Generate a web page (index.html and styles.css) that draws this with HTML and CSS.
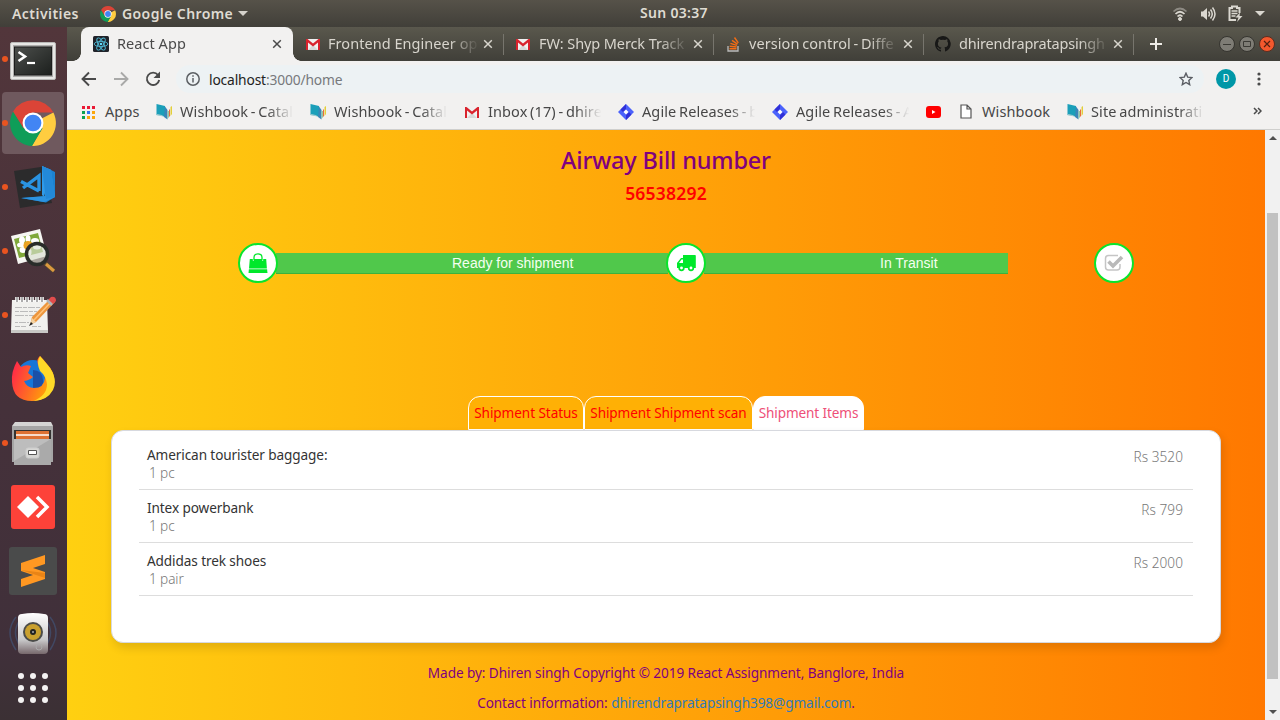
FILE: index.html
```html
<!DOCTYPE html>
<html lang="en">
<head>
<meta charset="utf-8">
<title>React App</title>
<link rel="stylesheet" href="styles.css">
</head>
<body>
<svg class="defs" width="0" height="0">
  <defs>
    <symbol id="chrome" viewBox="0 0 44 44">
      <path d="M22 22 41.500 12A22 22 0 0 1 21 44L31 27z" fill="#ffcd40"/>
      <path d="M22 22 13 27 3 11A22 22 0 0 0 21 44L31 27z" fill="#0f9d58"/>
      <path d="M3 11 13 27 22 22V12H41.500A22 22 0 0 0 3 11z" fill="#db4437"/>
      <circle cx="22" cy="22" r="10" fill="#fff"/><circle cx="22" cy="22" r="8" fill="#4285f4"/>
    </symbol>
    <symbol id="gmail" viewBox="0 0 16 16">
      <path d="M1 3h14v11H1z" fill="#f1f1f1"/><path d="M3 14 8 9l5 5z" fill="#d8d8d8"/>
      <path d="M1 14V3h1.500L8 7.500 13.500 3H15v11h-2V6.500L8 10.500 3 6.500V14z" fill="#d9232e"/>
    </symbol>
    <symbol id="wish" viewBox="0 0 17 17">
      <path d="M.500 1 9 3v11L5.500 12.500.500 12z" fill="#1b9fb9"/><path d="M0 12l1.500-1 4 1L9 14 5 13z" fill="#9bc9cf"/>
      <path d="M9 3.500 11.500 7v9.500L8 14z" fill="#3a86b8"/>
      <path d="M11.500 8h1.500v6l-1.500 2z" fill="#8fc6a8"/><path d="M13 7l1-1v7l-1 1z" fill="#e96b3c"/><path d="M14.500 4l1.500-1v8l-1.500 2z" fill="#e3cf3a"/>
    </symbol>
    <symbol id="jira" viewBox="0 0 16 16">
      <path d="M8 0 16 8 8 16 0 8z" fill="#4b62fb"/><path d="M8 0v5L5 8 2.500 5.500z M8 16v-5l3-3 2.500 2.500z" fill="#3030d8"/><path d="M8 5.500 10.500 8 8 10.500 5.500 8z" fill="#fff"/>
    </symbol>
    <symbol id="close" viewBox="0 0 10 10"><path d="M1.200 1.200 8.800 8.800M8.800 1.200 1.200 8.800" stroke="currentColor" stroke-width="1.500" fill="none"/></symbol>
  </defs>
</svg>

<header class="topbar">
  <span class="activities">Activities</span>
  <svg class="app-logo" width="16" height="16"><use href="#chrome"/></svg>
  <span class="app-name">Google Chrome</span>
  <svg class="caret" width="10" height="5" viewBox="0 0 10 5"><path d="M0 0h10L5 5z" fill="#d5d2cb"/></svg>
  <span class="clock">Sun 03:37</span>
  <div class="tray">
    <svg width="16" height="14" viewBox="0 0 16 14" fill="none" stroke="#dad7d0" stroke-width="1.700"><path d="M1.500 4.500Q8-1.500 14.500 4.500" stroke="#8d8a83"/><path d="M3.500 7Q8 2.500 12.500 7M5.500 9.500Q8 7 10.500 9.500"/><circle cx="8" cy="12" r="1.500" fill="#dad7d0" stroke-width="1"/></svg>
    <svg width="16" height="16" viewBox="0 0 16 16" fill="none" stroke="#dad7d0" stroke-width="1.500"><path d="M1 5.500h2L7 2v12l-4-3.500H1z" fill="#dad7d0" stroke="none"/><path d="M8.500 5.500q2 2.500 0 5M10.500 3.500q3.500 4.500 0 9M12.500 1.500q5 6.500 0 13"/></svg>
    <svg width="15" height="17" viewBox="0 0 15 17" fill="none" stroke="#dad7d0"><path d="M8 15H1.500V3H4V1.500h5V3h2.500v5" stroke-width="2"/><path d="M3.500 6h6M3.500 8.500h6M3.500 11h4" stroke-width="1.400"/><path d="M12 7.500 7.500 12.500h3L9 17l5.500-6h-3z" fill="#dad7d0" stroke="none"/></svg>
    <svg width="10" height="5" viewBox="0 0 10 5"><path d="M0 0h10L5 5z" fill="#dad7d0"/></svg>
  </div>
</header>

<div class="desktop">
  <nav class="dock">
    <div class="slot running"><svg class="terminal" width="46" height="38" viewBox="0 0 46 38"><defs><linearGradient id="tg" x2="1" y2="1"><stop stop-color="#4c4f4c"/><stop offset="1" stop-color="#1c1f1d"/></linearGradient></defs><rect x=".5" y=".5" width="45" height="37" rx="1.500" fill="#e7e7e5" stroke="#b9b9b7"/><rect x="3" y="3" width="40" height="32" fill="#acacaa"/><rect x="4.500" y="5" width="37" height="28" fill="url(#tg)" stroke="#1c1c1c"/><path d="M8.500 10 15 14.500 8.500 19" fill="none" stroke="#fff" stroke-width="2.600"/><path d="M17 21h8" stroke="#fff" stroke-width="2.200"/></svg></div>
    <div class="slot running current"><svg width="46" height="46"><use href="#chrome"/></svg></div>
    <div class="slot running"><svg width="46" height="46" viewBox="0 0 46 46"><path d="M4 7 34 2.500l8 36.500L10 44z" fill="#2b2b2c"/><path d="M11 34 33 32.500 36 34 38 4.500 45 8v25l-9 5.500z" fill="#1c82d0"/><path d="M32 2 41 6 34 33 32 31z" fill="#2f9bea"/><path d="M32 2 41 6 45 33 34 38 11 34 35 32z" fill="#2c93e0"/><path d="M32 2 41 6 45 33 36 35z" fill="#2389d8"/><path d="M11 17.500 29 27M13 24 29 12v15" fill="none" stroke="#2a93e2" stroke-width="3.400"/></svg></div>
    <div class="slot running"><svg width="46" height="46" viewBox="0 0 46 46"><path d="M1 8 30 1l7 27L8 36z" fill="#f6f6f2"/><path d="M4 11 28 5l5 19L9 30z" fill="#7fa83a"/><g fill="#fff"><ellipse cx="11" cy="17" rx="4" ry="2.500"/><ellipse cx="18" cy="11" rx="2.500" ry="4"/><ellipse cx="12" cy="12" rx="3" ry="3.500"/><ellipse cx="25" cy="13" rx="4" ry="3"/><ellipse cx="27" cy="19" rx="4" ry="2.500"/><ellipse cx="19" cy="24" rx="2.500" ry="4"/><ellipse cx="13" cy="22" rx="3.500" ry="3"/></g><circle cx="18" cy="17.500" r="4.500" fill="#eaa322"/><path d="M35 35 44 43" stroke="#51442f" stroke-width="5"/><path d="M36 36 44 43" stroke="#dc9a3f" stroke-width="3"/><circle cx="27" cy="26" r="10.500" fill="#d8dfcf" fill-opacity=".65" stroke="#292c29" stroke-width="3.500"/></svg></div>
    <div class="slot running"><svg width="46" height="40" viewBox="0 0 46 40"><path d="M2 5h35l1 31H1z" fill="#f1f1ee"/><path d="M1 35h37v3H1z" fill="#c8c8c5"/><path d="M7 2v5M12 2v5M17 2v5M22 2v5M27 2v5M32 2v5" stroke="#fff" stroke-width="3.600"/><path d="M7 2v5M12 2v5M17 2v5M22 2v5M27 2v5M32 2v5" stroke="#777" stroke-width="1.200"/><path d="M5 12.500h26" stroke="#bbb" stroke-dasharray="7 1 4 1"/><path d="M5 16.500h22" stroke="#bbb" stroke-dasharray="4 1 8 1"/><path d="M5 20.500h19" stroke="#bbb" stroke-dasharray="9 1 3 1"/><path d="M5 27.500h14" stroke="#bbb" stroke-dasharray="3 1 7 1"/><path d="M5 31.500h11M22 31.500h9" stroke="#bbb" stroke-dasharray="5 1"/><path d="m20 30 2-8L41 3l4 4-19 20z" fill="#ed963d"/><path d="m24 25 18-19" stroke="#ffc37a" stroke-width="1.500"/><path d="m38 5 3-3q5-1 5 4l-3 3z" fill="#e14c4c"/><path d="m37 5 5 5" stroke="#aeb5bb" stroke-width="2.500"/><path d="m20 30 2-7 4 4z" fill="#f3d2a1"/><path d="m19 31 2-4 2 2z" fill="#222"/></svg></div>
    <div class="slot"><svg width="44" height="46" viewBox="0 0 44 46"><defs><linearGradient id="fx" x1="0" y1=".3" x2="1" y2=".7"><stop stop-color="#ff2849"/><stop offset=".5" stop-color="#ff6a24"/><stop offset="1" stop-color="#ffb300"/></linearGradient></defs><circle cx="22" cy="20" r="16" fill="#1676d8"/><path d="M22 14q9 0 10 10t-10 10z" fill="#1b50a8"/><path d="M6 5 10 11q5-3 10-1l-3 7 5 4q-3 3-9 4 3 7 10 7 10 0 11-10-1-8-7-13-2-6 2-9 4 4 7 8 8 8 7 18-3 19-22 19T1 26Q0 16 6 5z" fill="url(#fx)"/><path d="M29 0q7 8 10 12 8 12 3 22-6 11-20 11 14-5 14-17-1-8-7-13-4-8 0-15z" fill="#ffda28"/></svg></div>
    <div class="slot running"><svg width="44" height="46" viewBox="0 0 44 46"><path d="M4 2h36l2 4H1z" fill="#d5d5d4"/><path d="M1 6h41v36H1z" fill="#a5a5a5"/><path d="M3 10h37v11H3z" fill="#343331"/><path d="M5 11h33v9H5z" fill="#dd7133"/><path d="M5 15h33" stroke="#fff" stroke-width="1.500"/><path d="M3 19h37v26H3z" fill="#aaa"/><path d="M3 19h37L3 41z" fill="#bdbdbd"/><rect x="15" y="28" width="13" height="10" rx="2" fill="#d7d7d5" stroke="#ccc"/><path d="M17.500 30.500h8v4h-8z" fill="#fff" stroke="#555"/></svg></div>
    <div class="slot"><svg width="44" height="44" viewBox="0 0 44 44"><rect width="44" height="44" rx="3" fill="#fd4239"/><path d="M17 11 28 22 17 33 6 22z" fill="#fff"/><path d="M26 12 36 22 26 32" fill="none" stroke="#fff" stroke-width="3.500"/></svg></div>
    <div class="slot"><svg width="48" height="48" viewBox="0 0 48 48"><rect width="48" height="48" rx="3" fill="#4a4b4b"/><path d="M12 16 36 8v9l-12 4 12 4v7l-24 8v-8l12-4-12-4z" fill="#ff9822"/><path d="m12 23 24 3v5z" fill="#e98416"/></svg></div>
    <div class="slot"><svg width="50" height="46" viewBox="0 0 50 46"><defs><linearGradient id="sp" x2="0" y2="1"><stop stop-color="#fff"/><stop offset=".65" stop-color="#c9c9ca"/><stop offset="1" stop-color="#77686c"/></linearGradient></defs><path d="M8 5Q-4 20 8 38M12 8Q3 20 12 34M42 5Q54 20 42 38M38 8Q47 20 38 34" fill="none" stroke="#414863" stroke-width="1.500"/><path d="M14 2q11-2 22 0 4 0 4 4v32q0 4-4 4H14q-4 0-4-4V6q0-4 4-4z" fill="url(#sp)"/><circle cx="25" cy="20" r="10" fill="#4b4c49"/><circle cx="25" cy="20" r="8" fill="#c9a02e"/><circle cx="25" cy="20" r="3" fill="#222"/><circle cx="25" cy="20" r="1" fill="#aaa"/><circle cx="31" cy="35" r="3" fill="none" stroke="#aaa"/></svg></div>
    <div class="show-apps"><i></i><i></i><i></i><i></i><i></i><i></i><i></i><i></i><i></i></div>
  </nav>

  <section class="browser">
    <div class="tabstrip">
      <div class="tab active">
        <svg width="16" height="16" viewBox="0 0 16 16"><rect width="16" height="16" rx="1.500" fill="#20232a"/><g fill="none" stroke="#50b9d4" stroke-width=".9"><ellipse cx="8" cy="8" rx="6.800" ry="2.600"/><ellipse cx="8" cy="8" rx="6.800" ry="2.600" transform="rotate(60 8 8)"/><ellipse cx="8" cy="8" rx="6.800" ry="2.600" transform="rotate(120 8 8)"/></g><circle cx="8" cy="8" r="1.300" fill="#61dafb"/></svg>
        <span class="tab-title">React App</span><svg class="x" width="10" height="10"><use href="#close"/></svg>
      </div>
      <div class="tab"><svg width="16" height="16"><use href="#gmail"/></svg><span class="tab-title">Frontend Engineer op</span><svg class="x" width="10" height="10"><use href="#close"/></svg></div>
      <div class="tab"><svg width="16" height="16"><use href="#gmail"/></svg><span class="tab-title merck">FW: Shyp Merck Track</span><svg class="x" width="10" height="10"><use href="#close"/></svg></div>
      <div class="tab"><svg width="16" height="16" viewBox="0 0 16 16" fill="none"><path d="M3 10v5h10v-5" stroke="#bbb" stroke-width="1.300"/><path d="M4.500 12.800h7M4.700 10.200l6.900.8M5.400 7.300l6.500 2.100M7 4.300l5.500 3.800M9.500 1.500l3.800 5.300" stroke="#f46d14" stroke-width="1.400"/></svg><span class="tab-title version">version control - Diffe</span><svg class="x" width="10" height="10"><use href="#close"/></svg></div>
      <div class="tab"><svg width="16" height="16" viewBox="0 0 16 16"><path fill="#181817" d="M8 0C3.600 0 0 3.600 0 8c0 3.500 2.300 6.500 5.500 7.600.4.100.5-.2.500-.4v-1.500c-2.200.5-2.700-.9-2.700-.9-.4-.9-.9-1.200-.9-1.200-.7-.5.100-.5.100-.5.800.1 1.200.8 1.200.8.700 1.200 1.900.9 2.300.7.100-.5.300-.9.500-1.100-1.800-.2-3.600-.9-3.600-4 0-.9.300-1.600.8-2.100-.1-.2-.4-1 .1-2.100 0 0 .7-.2 2.200.8a7.500 7.500 0 0 1 4 0c1.500-1 2.200-.8 2.200-.8.400 1.100.2 1.900.1 2.100.5.600.8 1.300.8 2.100 0 3.100-1.900 3.700-3.700 3.900.3.300.6.700.6 1.500v2.200c0 .2.100.5.500.4A8 8 0 0 0 8 0z"/></svg><span class="tab-title profile">dhirendrapratapsingh</span><svg class="x" width="10" height="10"><use href="#close"/></svg></div>
      <svg class="new-tab" width="12" height="12" viewBox="0 0 12 12"><path d="M6 0v12M0 6h12" stroke="#eeece7" stroke-width="2"/></svg>
      <div class="window-buttons">
        <svg width="16" height="16" viewBox="0 0 16 16"><circle cx="8" cy="8" r="7.500" fill="#7e7c75" stroke="#35342f"/><path d="M4 8.500h8" stroke="#3b3a35"/></svg>
        <svg width="16" height="16" viewBox="0 0 16 16"><circle cx="8" cy="8" r="7.500" fill="#7e7c75" stroke="#35342f"/><path d="M4.500 5.500h7v5h-7z" fill="none" stroke="#3b3a35"/></svg>
        <svg width="16" height="16" viewBox="0 0 16 16"><circle cx="8" cy="8" r="7.500" fill="#f4582d" stroke="#5a2d20"/><path d="m5 5 6 6m0-6-6 6" stroke="#542010" stroke-width="1.200"/></svg>
      </div>
    </div>

    <div class="toolbar">
      <svg width="16" height="16" viewBox="0 0 16 16" fill="none" stroke="#4a4a4a" stroke-width="1.900"><path d="M15 8H2M8 1.500 1.500 8 8 14.500"/></svg>
      <svg width="16" height="16" viewBox="0 0 16 16" fill="none" stroke="#a9a9a8" stroke-width="1.900"><path d="M1 8h13M8 1.500 14.500 8 8 14.500"/></svg>
      <svg width="16" height="16" viewBox="0 0 16 16"><path d="M13 4A6.200 6.200 0 1 0 14.200 9" fill="none" stroke="#4a4a4a" stroke-width="1.900"/><path d="M15 .5V7H8.500z" fill="#4a4a4a"/></svg>
      <div class="omnibox">
        <svg width="14" height="14" viewBox="0 0 14 14"><circle cx="7" cy="7" r="6.200" fill="none" stroke="#5c6064" stroke-width="1.500"/><path d="M7 6v4.500M7 3.200v1.600" stroke="#5c6064" stroke-width="1.500"/></svg>
        <span class="url"><b>localhost</b>:3000/home</span>
        <svg class="star" width="14" height="14" viewBox="0 0 14 14"><path d="m7 1.200 1.700 3.900 4.300.4-3.200 2.900.9 4.300L7 10.500l-3.700 2.200.9-4.300L1 5.500l4.300-.4z" fill="none" stroke="#5a5d63" stroke-width="1.400"/></svg>
      </div>
      <span class="avatar">D</span>
      <svg class="menu" width="4" height="14" viewBox="0 0 4 14" fill="#4a4a4a"><circle cx="2" cy="2" r="1.600"/><circle cx="2" cy="7" r="1.600"/><circle cx="2" cy="12" r="1.600"/></svg>
    </div>

    <div class="bookmarks">
      <span class="bm bm-apps"><svg width="14" height="14" viewBox="0 0 14 14"><path d="M1 1h3v3H1zM6 1h3v3H6zM11 1h3v3h-3z" fill="#ea1a35"/><path d="M1 6h3v3H1z" fill="#0ba353"/><path d="M6 6h3v3H6z" fill="#2f75f4"/><path d="M11 6h3v3h-3zM6 11h3v3H6zM11 11h3v3h-3z" fill="#fba70b"/><path d="M1 11h3v3H1z" fill="#0ba353"/></svg><span>Apps</span></span>
      <span class="bm"><svg width="17" height="17"><use href="#wish"/></svg><span class="fade">Wishbook - Catal</span></span>
      <span class="bm"><svg width="17" height="17"><use href="#wish"/></svg><span class="fade">Wishbook - Catal</span></span>
      <span class="bm"><svg width="16" height="16"><use href="#gmail"/></svg><span class="fade">Inbox (17) - dhire</span></span>
      <span class="bm"><svg width="16" height="16"><use href="#jira"/></svg><span class="fade">Agile Releases - b</span></span>
      <span class="bm"><svg width="16" height="16"><use href="#jira"/></svg><span class="fade">Agile Releases - A</span></span>
      <span class="bm bm-video"><svg width="15" height="12" viewBox="0 0 15 12"><rect width="15" height="12" rx="3" fill="#f00"/><path d="M6 4v4l3.500-2z" fill="#fff"/></svg></span>
      <span class="bm bm-page"><svg width="12" height="15" viewBox="0 0 12 15"><path d="M1 1h6l4 4v9H1zM7 1v4h4" fill="#fff" stroke="#555" stroke-width="1.200"/></svg><span>Wishbook</span></span>
      <span class="bm"><svg width="17" height="17"><use href="#wish"/></svg><span class="fade site">Site administrati</span></span>
      <svg class="more" width="9" height="8" viewBox="0 0 9 8"><path d="M1 1l3 3-3 3M5 1l3 3-3 3" fill="none" stroke="#4a4a4a" stroke-width="1.500"/></svg>
    </div>

    <div class="viewport">
      <main class="page">
        <h1>Airway Bill number</h1>
        <h2>56538292</h2>
        <div class="progress">
          <div class="step"><svg width="20" height="20" viewBox="0 0 20 20"><path d="M1.800 6h3v1.500q.5 1 1.200 0V6h8v1.500q.5 1 1.200 0V6h3l.7 9.500H1z" fill="#00e82b"/><path d="M.9 16.300h18.200l.4 3.700H.5z" fill="#00e82b"/><path d="M6 7.500V4.500Q6 .8 10 .8t4 3.700v3" fill="none" stroke="#00e82b" stroke-width="1.300"/></svg></div>
          <div class="bar bar-ready">Ready for shipment</div>
          <div class="step"><svg width="20" height="18" viewBox="0 0 20 18"><path d="M7 1h12q.8 0 .8.800V14H1V9l4-5h2zM3 9h4V5.500H5.500z" fill="#00e82b" fill-rule="evenodd"/><circle cx="5.500" cy="14" r="2.300" fill="#fff" stroke="#00e82b" stroke-width="1.700"/><circle cx="15" cy="14" r="2.300" fill="#fff" stroke="#00e82b" stroke-width="1.700"/></svg></div>
          <div class="bar bar-transit">In Transit</div>
          <div class="step step-last"><svg width="20" height="18" viewBox="0 0 20 18"><path d="M14 1.500H4.500q-3 0-3 3v8.500q0 3 3 3H13q3 0 3-3v-3" fill="none" stroke="#c5c5c5" stroke-width="1.500"/><path d="M4.500 7.500 9 12l9-9" fill="none" stroke="#b9b9b9" stroke-width="3.600"/></svg></div>
        </div>
        <div class="page-tabs">
          <span>Shipment Status</span><span class="scan">Shipment Shipment scan</span><span class="selected">Shipment Items</span>
        </div>
        <div class="card">
          <div class="item"><div><p class="name">American tourister baggage:</p><p class="qty">1 pc</p></div><span class="price">Rs 3520</span></div>
          <div class="item"><div><p class="name">Intex powerbank</p><p class="qty">1 pc</p></div><span class="price">Rs 799</span></div>
          <div class="item"><div><p class="name">Addidas trek shoes</p><p class="qty">1 pair</p></div><span class="price">Rs 2000</span></div>
        </div>
        <footer>
          <p class="made">Made by: Dhiren singh Copyright © 2019 React Assignment, Banglore, India</p>
          <p class="contact">Contact information: <a>dhirendrapratapsingh398@gmail.com</a>.</p>
        </footer>
      </main>
      <div class="scrollbar">
        <svg width="8" height="4" viewBox="0 0 8 4"><path d="M0 4h8L4 0z" fill="#505050"/></svg>
        <div class="thumb"></div>
        <svg class="down" width="8" height="4" viewBox="0 0 8 4"><path d="M0 0h8L4 4z" fill="#505050"/></svg>
      </div>
    </div>
  </section>
</div>
</body>
</html>
```
FILE: styles.css
```css
* { box-sizing: border-box; }
body { margin: 0; width: 1280px; height: 720px; overflow: hidden; font-family: "Noto Sans", "Open Sans", sans-serif; }
svg { display: block; flex: none; }
.defs { position: absolute; }
p, h1, h2 { margin: 0; }

/* system bar */
.topbar { position: relative; display: flex; align-items: center; height: 27px; padding: 0 15px 0 12px; background: linear-gradient(#565249, #413f39); color: #dfdbd2; font-size: 14px; font-weight: 600; white-space: nowrap; }
.activities { width: 68px; letter-spacing: .45px; }
.app-logo { margin-left: 20px; }
.app-name { width: 111px; margin-left: 6px; letter-spacing: .4px; }
.caret { margin-left: 5px; }
.clock { position: absolute; left: 640px; letter-spacing: .3px; top: 3px; }
.tray { display: flex; align-items: center; gap: 12px; margin-left: auto; }

/* dock */
.desktop { display: flex; height: 693px; }
.dock { width: 67px; background: linear-gradient(#52363b, #45313a 55%, #40303a 90%, #3b3034); padding-top: 1px; }
.slot { position: relative; display: flex; align-items: center; justify-content: center; height: 62px; width: 62px; margin: 0 0 2px 2px; border-radius: 4px; }
.terminal { margin-top: 4px; }
.current { background: #6f595e; }
.running::before { content: ""; position: absolute; left: 0; top: 28px; width: 6px; height: 6px; border-radius: 50%; background: #e95420; }
.show-apps { display: grid; grid-template-columns: repeat(3, 6px); gap: 6px; margin: 7px 0 0 18px; }
.show-apps i { height: 6px; border-radius: 50%; background: #f4f2f2; }

/* browser frame */
.browser { width: 1213px; display: flex; flex-direction: column; }
.tabstrip { display: flex; height: 34px; padding-left: 14px; background: linear-gradient(#5a584d, #403f39); color: #d8d5cd; }
.tab { position: relative; display: flex; align-items: center; width: 210px; padding-left: 12px; font-size: 14.500px; letter-spacing: .05px; }
.tab:not(.active)::after { content: ""; position: absolute; right: -1px; top: 7px; width: 1px; height: 21px; background: #77756d; }
.tab-title { width: 151px; margin-left: 7px; padding-bottom: 2px; white-space: nowrap; -webkit-mask-image: linear-gradient(90deg, #000 80%, transparent); mask-image: linear-gradient(90deg, #000 80%, transparent); }
.tab .x { margin-left: 4px; }
.merck { letter-spacing: -.1px; margin-left: 8px; width: 150px; }
.version { letter-spacing: .08px; word-spacing: -1.200px; margin-left: 8px; width: 150px; }
.profile { letter-spacing: -.2px; margin-left: 8px; width: 150px; }
.tab.active { width: 212px; background: #f2f1f0; border-radius: 8px 8px 0 0; color: #4a4a4a; }
.active::before, .active::after { content: ""; position: absolute; bottom: 0; width: 8px; height: 8px; }
.active::before { left: -8px; background: radial-gradient(circle at 0 0, transparent 7.500px, #f2f1f0 8px); }
.active::after { right: -8px; background: radial-gradient(circle at 100% 0, transparent 7.500px, #f2f1f0 8px); }
.active .tab-title { margin-left: 8px; }
.new-tab { align-self: center; margin-left: 17px; }
.window-buttons { display: flex; align-items: center; gap: 4px; margin: 0 5px 0 auto; }
.toolbar { display: flex; align-items: center; height: 36px; padding-left: 14px; gap: 16px; background: #f2f1f0; }
.omnibox { display: flex; align-items: center; width: 1028px; height: 28px; margin-left: -1px; padding: 0 11px 0 10px; border-radius: 14px; background: #edf2f4; }
.url { margin-left: 9px; color: #77797c; font-size: 13.800px; letter-spacing: -.15px; }
.url b { color: #222; font-weight: 400; }
.star { margin-left: auto; }
.avatar { width: 20px; height: 20px; margin-left: -4px; border-radius: 50%; background: #0097a7; color: #fff; font: 10px/20px Roboto, sans-serif; text-align: center; }
.menu { margin-left: 5px; }
.bookmarks { display: flex; align-items: center; height: 33px; padding: 0 0 4px 14px; border-bottom: 1px solid #cfcfcd; background: #f2f1f0; color: #474747; font-size: 14.500px; letter-spacing: .1px; word-spacing: -1.200px; white-space: nowrap; }
.bm { display: flex; align-items: center; width: 154px; }
.bm svg { margin-top: 1px; }
.bm span { margin-left: 8px; }
.bm svg + .fade { width: 118px; -webkit-mask-image: linear-gradient(90deg, #000 74%, transparent 96%); mask-image: linear-gradient(90deg, #000 74%, transparent 96%); }
.bm svg[width="17"] + .fade { margin-left: 7px; }
.bm-apps { width: 75px; }
.bm-apps span, .bm-page span { margin-left: 10px; }
.bm-video { width: 34px; }
.bm-page { width: 107px; }
.more { margin-left: 32px; }

/* web page */
.viewport { display: flex; height: 590px; }
.page { display: flex; flex-direction: column; width: 1198px; padding: 13px 44px 0; background: linear-gradient(90deg, #ffd011, #ff7800); }
h1 { height: 34px; text-align: center; color: #800080; font-size: 23.500px; line-height: 34px; font-weight: 500; letter-spacing: -.17px; }
h2 { margin-top: 5px; text-align: center; color: #f00; font-size: 17.500px; line-height: 22px; font-weight: 600; letter-spacing: .2px; }
.progress { display: flex; align-items: center; height: 40px; margin: 39px 0 0 127px; }
.step { z-index: 1; display: flex; align-items: center; justify-content: center; width: 40px; height: 40px; border: 2px solid #09e52c; border-radius: 50%; background: #fff; }
.bar { height: 21px; border-bottom: 1px solid #3db13d; background: #50c84b; color: #f4fff0; font: 14px/20px "Liberation Sans", sans-serif; }
.bar-ready { width: 392px; margin: 0 -2px; padding-left: 176px; }
.bar-transit { width: 304px; margin-left: -2px; padding-left: 176px; }
.step-last { margin-left: 86px; }
.page-tabs { display: flex; justify-content: center; height: 34px; margin-top: 113px; color: #f00; font-size: 13.600px; letter-spacing: -.08px; line-height: 32px; text-align: center; white-space: nowrap; }
.page-tabs span { width: 116px; border: 1px solid #fff; border-radius: 12px 12px 0 0; background: #ffb005; }
.page-tabs .scan { width: 169px; letter-spacing: -.12px; }
.page-tabs .selected { width: 111px; background: #fff; color: #ee4f78; letter-spacing: -.12px; }
.card { height: 213px; padding: 6px 27px; border: 1px solid #d7d9df; border-radius: 12px; background: #fff; box-shadow: 2px 5px 10px rgba(0, 0, 0, .12); }
.item { display: flex; justify-content: space-between; height: 53px; padding: 9px 10px 0 8px; border-bottom: 1px solid #ddd; font-size: 13.600px; line-height: 18px; letter-spacing: -.1px; }
.name { color: #333; }
.qty { padding-left: 2px; color: #777; font-weight: 300; }
.price { padding-top: 2px; color: #777; font-weight: 300; letter-spacing: .05px; }
footer { padding-top: 15px; text-align: center; color: #800080; font-size: 13.600px; line-height: 30px; letter-spacing: -.08px; }
footer a { color: #337ab7; }
.scrollbar { display: flex; flex-direction: column; align-items: center; width: 15px; padding-top: 6px; background: #f1f1f1; }
.thumb { width: 11px; height: 466px; margin-top: 73px; background: #c1c1c1; }
.down { margin-top: 31px; }
```
